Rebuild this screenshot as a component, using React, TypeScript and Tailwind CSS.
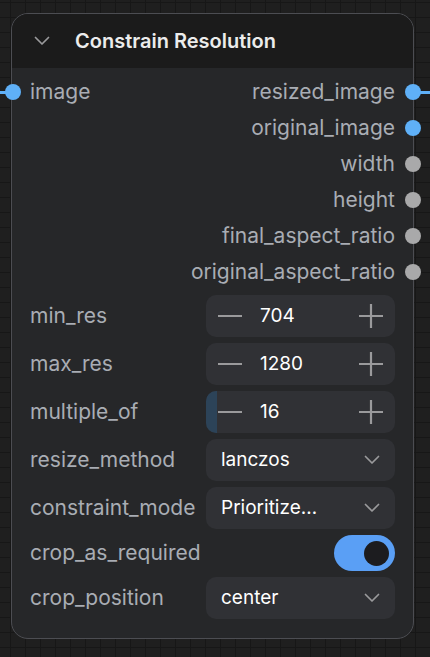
import React from "react";

const font = { fontFamily: "Inter, 'Noto Sans', sans-serif" };

function Chevron({ className = "", size = 18 }: { className?: string; size?: number }) {
  return (
    <svg width={size} height={size} viewBox="0 0 18 18" className={className} fill="none">
      <path d="M2.5 5.5 L9 12 L15.5 5.5" stroke="currentColor" strokeWidth="1.7" strokeLinecap="round" strokeLinejoin="round" />
    </svg>
  );
}

function Dot({ color }: { color: "blue" | "gray" }) {
  return (
    <span
      className={
        "block w-[16px] h-[16px] rounded-full " +
        (color === "blue" ? "bg-[#5fb0f7]" : "bg-[#a9a9aa]")
      }
    />
  );
}

function OutRow({ label, color }: { label: string; color: "blue" | "gray" }) {
  return (
    <div className="relative h-[36px] flex items-center justify-end pr-[18px]">
      <span className="text-[21px] text-[#a9adb4]">{label}</span>
      <span className="absolute right-[-8px] top-[10px]">
        <Dot color={color} />
      </span>
    </div>
  );
}

function Label({ text }: { text: string }) {
  return <span className="w-[194px] shrink-0 pl-[18px] text-[21px] text-[#a9adb4]">{text}</span>;
}

function NumberWidget({ label, value, progress }: { label: string; value: string; progress?: boolean }) {
  return (
    <div className="flex items-center h-[42px]">
      <Label text={label} />
      <div className="relative flex-1 h-[42px] rounded-[10px] bg-[#303135] overflow-hidden flex items-center">
        {progress && <span className="absolute left-0 top-0 h-full w-[11px] bg-[#2c4358]" />}
        <svg width="26" height="26" viewBox="0 0 26 26" className="relative ml-[11px] text-[#9a9a9c]">
          <path d="M1 13 H25" stroke="currentColor" strokeWidth="2.2" />
        </svg>
        <span className="relative ml-[17px] text-[19px] text-white">{value}</span>
        <svg width="26" height="26" viewBox="0 0 26 26" className="relative ml-auto mr-[11px] text-[#9a9a9c]">
          <path d="M1 13 H25 M13 1 V25" stroke="currentColor" strokeWidth="2.2" />
        </svg>
      </div>
    </div>
  );
}

function ComboWidget({ label, value }: { label: string; value: string }) {
  return (
    <div className="flex items-center h-[42px]">
      <Label text={label} />
      <div className="flex-1 h-[42px] rounded-[10px] bg-[#303135] flex items-center pl-[15px] pr-[14px]">
        <span className="text-[19px] text-white">{value}</span>
        <Chevron className="ml-auto text-[#9a9a9c]" />
      </div>
    </div>
  );
}

export default function App() {
  return (
    <div
      className="w-[430px] h-[657px] overflow-hidden bg-[#1f1f1f] bg-[linear-gradient(to_right,#171717_1px,transparent_1px),linear-gradient(to_bottom,#171717_1px,transparent_1px)] bg-[size:15px_15px] bg-[position:10px_2px] pt-[13px] pl-[11px]"
      style={font}
    >
      <div className="relative w-[403px] h-[626px] rounded-[17px] border border-[#4c4d52] bg-[#262729]">
        <div className="h-[54px] rounded-t-[16px] bg-[#1b1b1b] flex items-center pl-[21px]">
          <Chevron size={18} className="text-[#9a9a9c]" />
          <span className="ml-[24px] text-[20px] font-semibold text-[#ececec]">Constrain Resolution</span>
        </div>
        <div className="pt-[6px]">
          <div className="relative h-[36px] flex items-center justify-between pl-[18px] pr-[18px]">
            <span className="text-[21px] text-[#a9adb4]">image</span>
            <span className="absolute left-[-7px] top-[10px]">
              <Dot color="blue" />
            </span>
            <span className="absolute left-[-12px] top-[17px] w-[8px] h-[3px] bg-[#5fb0f7]" />
            <span className="text-[21px] text-[#a9adb4]">resized_image</span>
            <span className="absolute right-[-8px] top-[10px]">
              <Dot color="blue" />
            </span>
            <span className="absolute right-[-17px] top-[17px] w-[12px] h-[3px] bg-[#5fb0f7]" />
          </div>
          <OutRow label="original_image" color="blue" />
          <OutRow label="width" color="gray" />
          <OutRow label="height" color="gray" />
          <OutRow label="final_aspect_ratio" color="gray" />
          <OutRow label="original_aspect_ratio" color="gray" />
        </div>
        <div className="pt-[5px] pr-[18px] flex flex-col gap-[6px]">
          <NumberWidget label="min_res" value="704" />
          <NumberWidget label="max_res" value="1280" />
          <NumberWidget label="multiple_of" value="16" progress />
          <ComboWidget label="resize_method" value="lanczos" />
          <ComboWidget label="constraint_mode" value="Prioritize…" />
          <div className="flex items-center h-[36px]">
            <Label text="crop_as_required" />
            <div className="flex-1 flex justify-end">
              <div className="w-[61px] h-[36px] rounded-full bg-[#5a9ff5] flex items-center justify-end pr-[6px]">
                <span className="w-[25px] h-[25px] rounded-full bg-[#1c1c1f]" />
              </div>
            </div>
          </div>
          <ComboWidget label="crop_position" value="center" />
        </div>
      </div>
    </div>
  );
}
